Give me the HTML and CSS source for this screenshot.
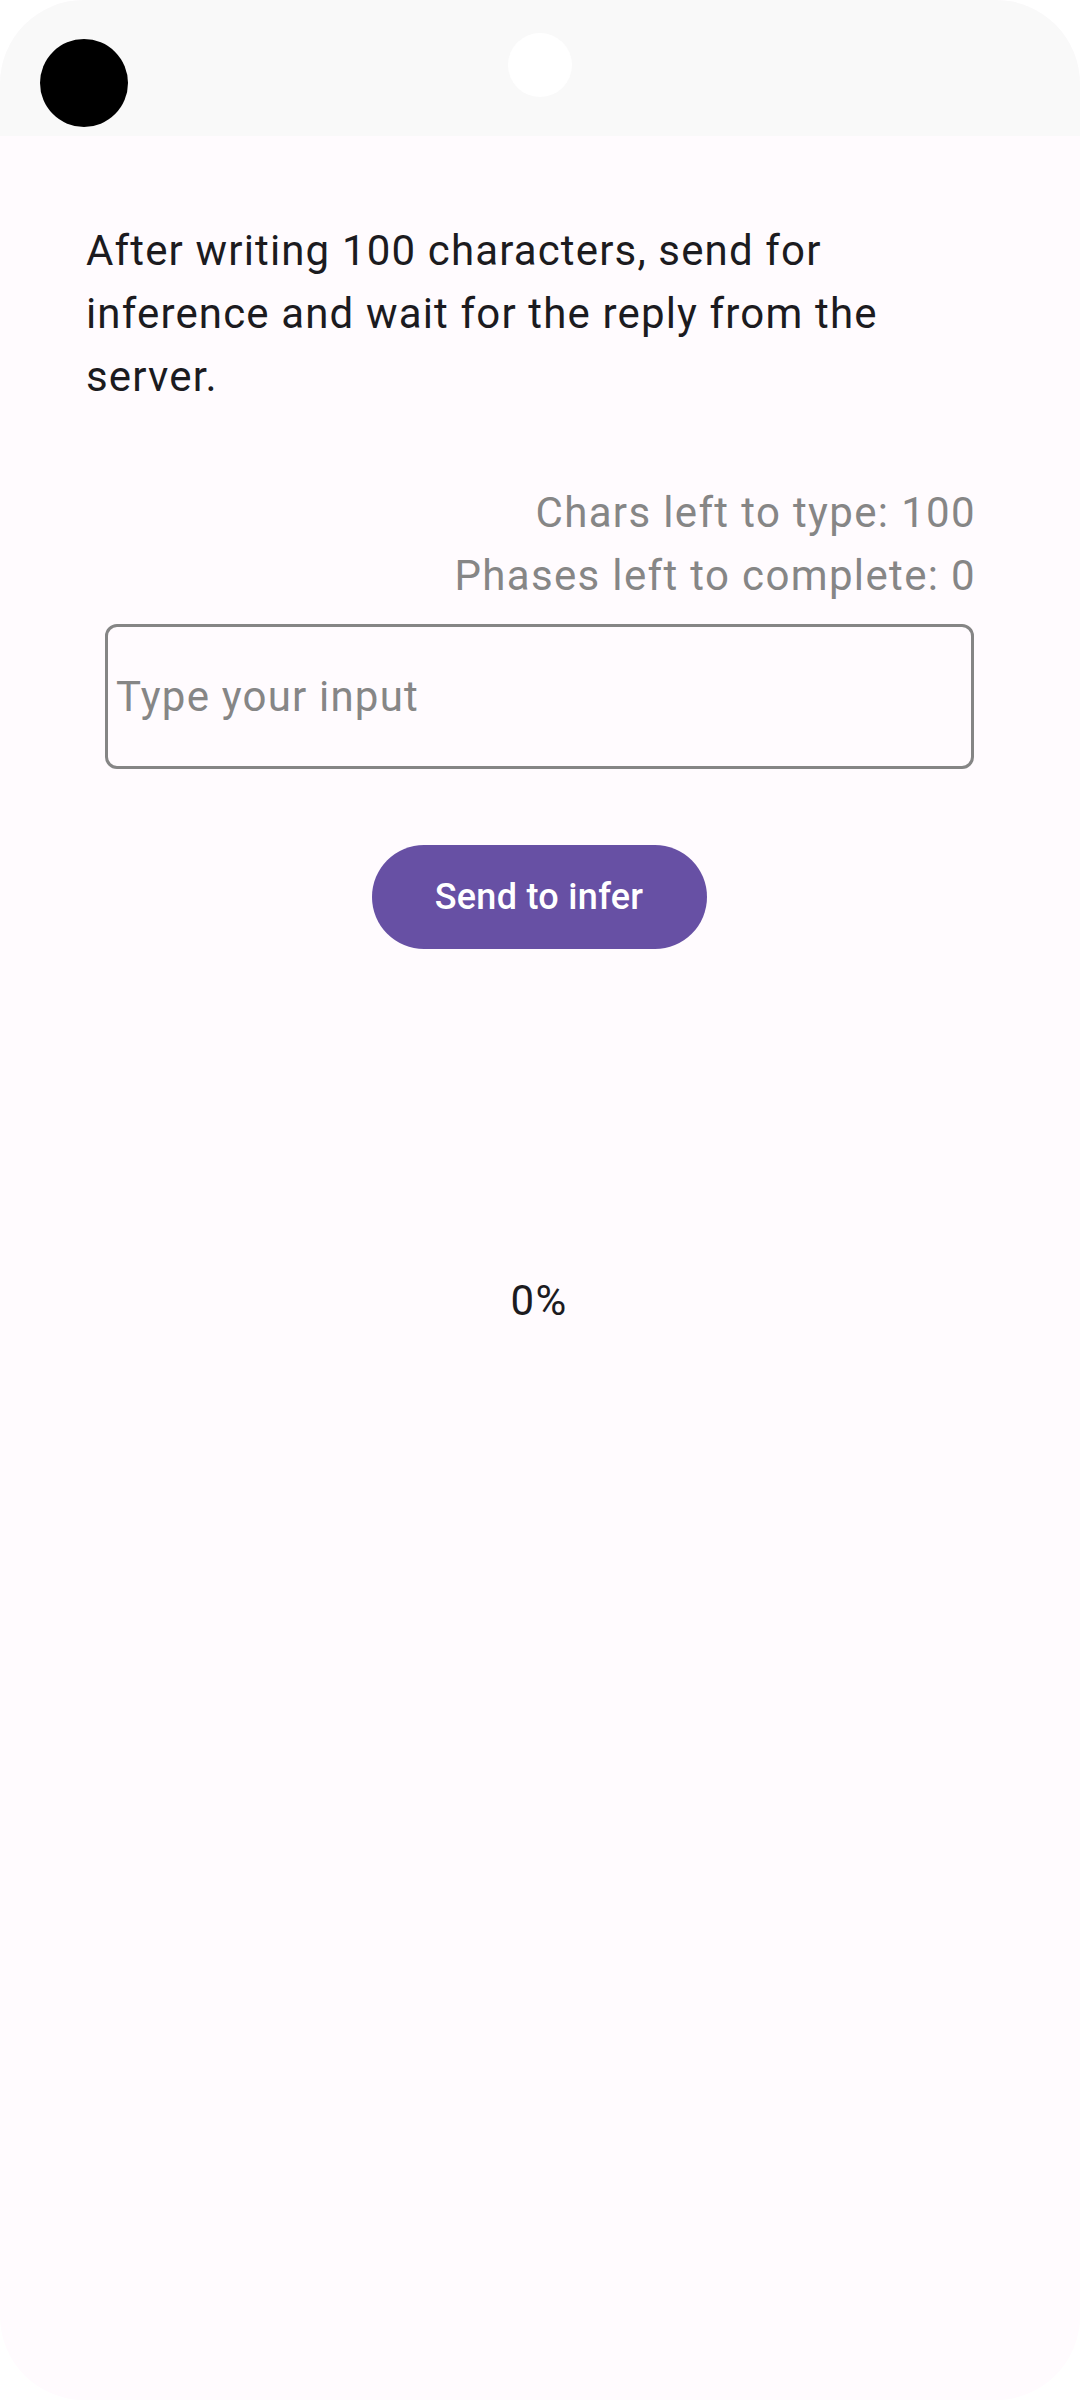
FILE: index.html
```html
<!DOCTYPE html>
<html>
<head>
<meta charset="utf-8">
<link rel="stylesheet" href="styles.css">
</head>
<body>
<div class="screen">
  <div class="statusbar">
    <span class="cam cam-left"></span>
    <span class="cam cam-center"></span>
  </div>
  <div class="content">
    <p class="intro">After writing 100 characters, send for inference and wait for the reply from the server.</p>
    <div class="counters">
      <div>Chars left to type: 100</div>
      <div>Phases left to complete: 0</div>
    </div>
    <div class="field">Type your input</div>
    <div class="btn-row"><div class="btn">Send to infer</div></div>
    <div class="progress">0%</div>
  </div>
</div>
</body>
</html>
```
FILE: styles.css
```css
html, body { margin: 0; padding: 0; background: #ffffff; }
body { width: 1080px; height: 2400px; overflow: hidden; }
.screen {
  width: 1080px; height: 2400px; box-sizing: border-box;
  border-radius: 84px; overflow: hidden;
  background: #fffbfe;
  font-family: Roboto, "Noto Sans", sans-serif;
}
.statusbar { position: relative; height: 136px; background: #f9f9f9; }
.cam { position: absolute; border-radius: 50%; }
.cam-left { left: 40px; top: 39px; width: 88px; height: 88px; background: #000; }
.cam-center { left: 508px; top: 33px; width: 64px; height: 64px; background: #fff; }
.content { display: flex; flex-direction: column; padding: 83px 104px 0 86px; }
.intro {
  margin: 0; font-size: 42px; line-height: 63px; letter-spacing: 1.15px;
  color: #1c1b1f;
}
.counters {
  margin-top: 73px; text-align: right; font-size: 42px; line-height: 63px;
  letter-spacing: 1.35px; color: #868686;
}
.field {
  margin: 17px 2px 0 19px; height: 145px; box-sizing: border-box;
  border: 3px solid #858585; border-radius: 12px;
  display: flex; align-items: center; padding-left: 8px;
  font-size: 42px; letter-spacing: 1.2px; color: #868686;
}
.btn-row { display: flex; justify-content: center; margin-top: 76px; padding-left: 16px; }
.btn {
  width: 335px; height: 104px; border-radius: 52px; background: #6750a4;
  color: #fff; font-size: 36px; font-weight: 500; letter-spacing: 0.3px;
  display: flex; align-items: center; justify-content: center;
}
.progress {
  margin-top: 320px; text-align: center; padding-left: 16px;
  font-size: 42px; line-height: 63px; letter-spacing: 1.2px; color: #1c1b1f;
}
```
